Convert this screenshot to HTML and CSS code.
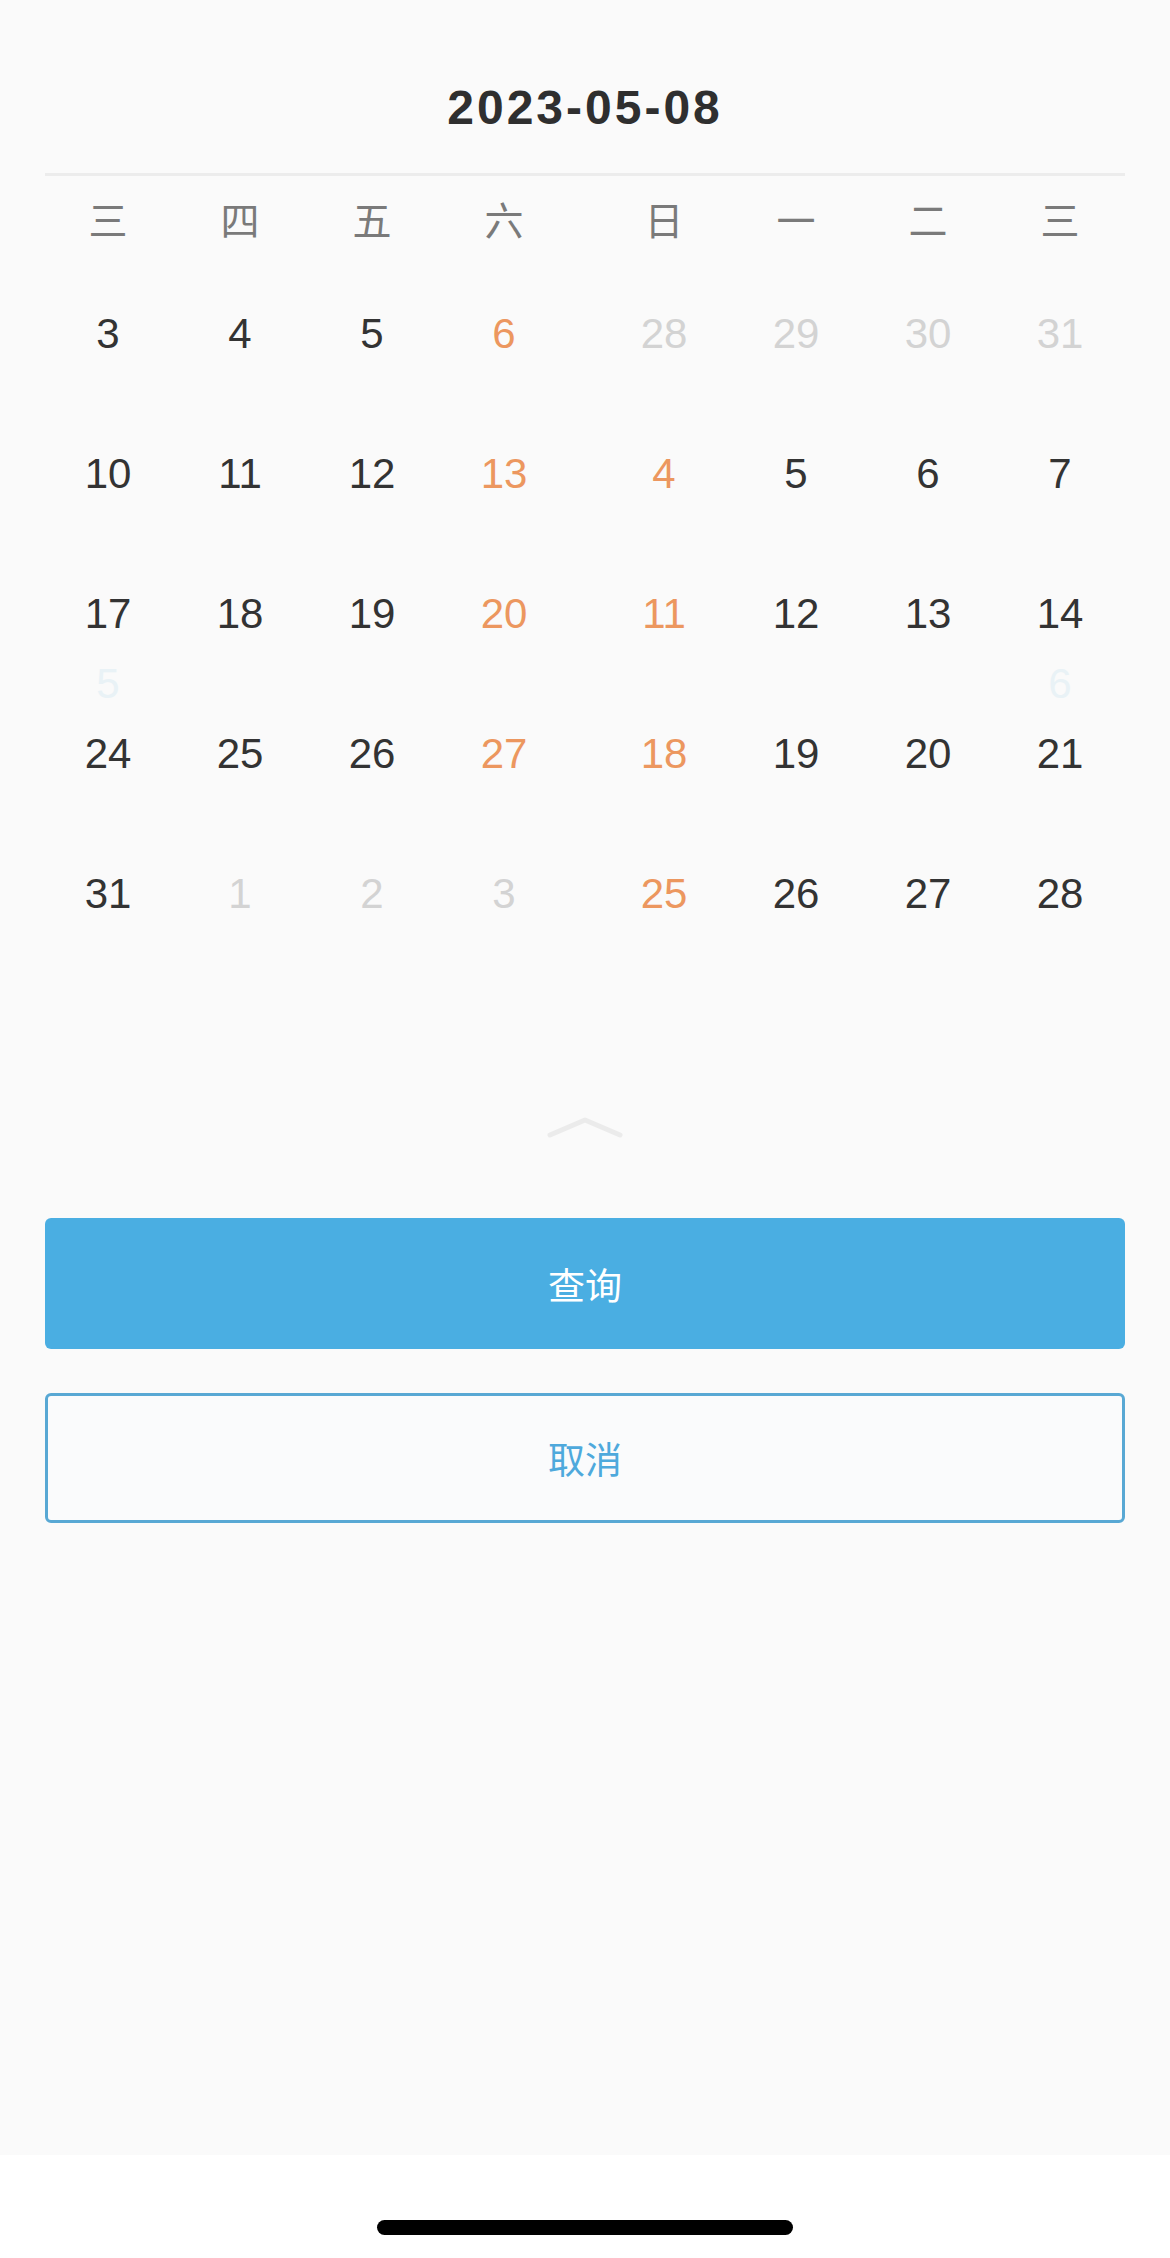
FILE: index.html
```html
<!DOCTYPE html>
<html lang="zh-CN">
<head>
<meta charset="utf-8">
<title>日期选择</title>
<link rel="stylesheet" href="styles.css">
</head>
<body>
<div class="screen">
  <main class="sheet">
    <header class="sheet-head">
      <h1 class="current-date">2023-05-08</h1>
    </header>

    <section class="calendar">
      <!-- page sliding out: May -->
      <div class="pane">
        <div class="wd">三</div><div class="wd">四</div><div class="wd">五</div><div class="wd">六</div>
        <div class="day">3</div><div class="day">4</div><div class="day">5</div><div class="day weekend">6</div>
        <div class="day">10</div><div class="day">11</div><div class="day">12</div><div class="day weekend">13</div>
        <div class="day">17</div><div class="day">18</div><div class="day">19</div><div class="day weekend">20</div>
        <div class="day">24</div><div class="day">25</div><div class="day">26</div><div class="day weekend">27</div>
        <div class="day">31</div><div class="day muted">1</div><div class="day muted">2</div><div class="day muted">3</div>
        <span class="ghost ghost-left">5</span>
      </div>
      <!-- page sliding in -->
      <div class="pane">
        <div class="wd">日</div><div class="wd">一</div><div class="wd">二</div><div class="wd">三</div>
        <div class="day muted">28</div><div class="day muted">29</div><div class="day muted">30</div><div class="day muted">31</div>
        <div class="day weekend">4</div><div class="day">5</div><div class="day">6</div><div class="day">7</div>
        <div class="day weekend">11</div><div class="day">12</div><div class="day">13</div><div class="day">14</div>
        <div class="day weekend">18</div><div class="day">19</div><div class="day">20</div><div class="day">21</div>
        <div class="day weekend">25</div><div class="day">26</div><div class="day">27</div><div class="day">28</div>
        <span class="ghost ghost-right">6</span>
      </div>
    </section>

    <div class="collapse">
      <svg width="76" height="22" viewBox="0 0 76 22" aria-hidden="true">
        <polyline points="3,18 38,3 73,18" fill="none" stroke="#ebebeb" stroke-width="5" stroke-linecap="round" stroke-linejoin="round"/>
      </svg>
    </div>

    <div class="actions">
      <button class="btn btn-primary" type="button">查询</button>
      <button class="btn btn-outline" type="button">取消</button>
    </div>
  </main>

  <footer class="home-area">
    <div class="home-indicator"></div>
  </footer>
</div>
</body>
</html>
```

FILE: styles.css
```css
* {
  box-sizing: border-box;
}

html, body {
  margin: 0;
  padding: 0;
}

body {
  font-family: "Liberation Sans", "Noto Sans CJK SC", sans-serif;
  background: #ffffff;
  color: #333333;
}

.screen {
  width: 1170px;
  height: 2258px;
  display: flex;
  flex-direction: column;
}

.sheet {
  height: 2155px;
  background: #fafafa;
  display: flex;
  flex-direction: column;
}

/* title + divider */
.sheet-head {
  margin: 0 45px;
  padding-top: 78px;
  padding-bottom: 35px;
  border-bottom: 3px solid #ececec;
  text-align: center;
}

.current-date {
  margin: 0;
  font-size: 48px;
  line-height: 60px;
  font-weight: 700;
  letter-spacing: 3px;
  color: #2f2f2f;
}

/* two overlapping month pages */
.calendar {
  display: flex;
  gap: 28px;
  padding-left: 42px;
  padding-top: 14px;
}

.pane {
  position: relative;
  display: grid;
  grid-template-columns: repeat(4, 132px);
  grid-template-rows: 74px repeat(5, 140px);
}

.wd {
  display: flex;
  align-items: center;
  justify-content: center;
  padding-bottom: 18px;
  font-family: "Noto Sans CJK SC", sans-serif;
  font-size: 39px;
  color: #7a7a7a;
}

.day {
  display: flex;
  align-items: center;
  justify-content: center;
  font-size: 42px;
  color: #333333;
}

.day.weekend {
  color: #ec975f;
}

.day.muted {
  color: #d3d3d3;
}

/* faint numbers left over from the page transition */
.ghost {
  position: absolute;
  top: 464px;
  width: 132px;
  height: 60px;
  line-height: 60px;
  text-align: center;
  font-size: 42px;
  color: #e9f2f6;
}

.ghost-left {
  left: 0;
}

.ghost-right {
  left: 396px;
}

/* collapse chevron */
.collapse {
  display: flex;
  justify-content: center;
  margin-top: 153px;
}

.collapse svg {
  display: block;
}

/* buttons */
.actions {
  display: flex;
  flex-direction: column;
  gap: 44px;
  margin: 79px 45px 0;
}

.btn {
  width: 100%;
  height: 131px;
  border-radius: 6px;
  font-family: "Noto Sans CJK SC", sans-serif;
  font-size: 37px;
  cursor: pointer;
}

.btn-primary {
  background: #4aaee2;
  border: none;
  color: #ffffff;
}

.btn-outline {
  height: 130px;
  background: #fafbfc;
  border: 3px solid #58a8d4;
  color: #4ea9dc;
}

/* iOS home indicator */
.home-area {
  flex: 1;
  background: #ffffff;
  display: flex;
  justify-content: center;
  padding-top: 65px;
}

.home-indicator {
  width: 416px;
  height: 15px;
  border-radius: 8px;
  background: #000000;
}
```
